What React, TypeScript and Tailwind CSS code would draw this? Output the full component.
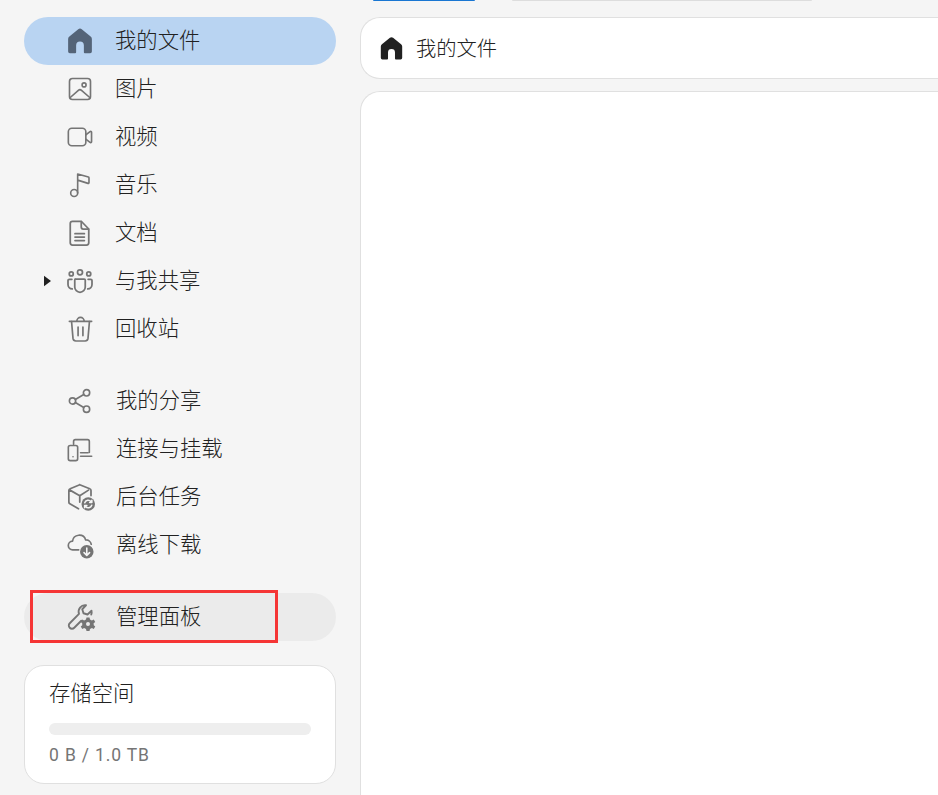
const gray = "#757575";

function Home({ className = "", fill = gray }: { className?: string; fill?: string }) {
  return (
    <svg viewBox="0 0 24 24" className={className}>
      <path
        fill={fill}
        d="M10.6 2.5a2.2 2.2 0 0 1 2.8 0l7.1 5.8a2.6 2.6 0 0 1 1 2v10a1.4 1.4 0 0 1-1.4 1.4h-4.2a.8.8 0 0 1-.8-.8v-5.4a3.1 3.1 0 0 0-6.2 0v5.4a.8.8 0 0 1-.8.8H3.9a1.4 1.4 0 0 1-1.4-1.4v-10a2.6 2.6 0 0 1 1-2z"
      />
    </svg>
  );
}

function Stroke({ children, className = "w-[28px] h-[28px]" }: { children: React.ReactNode; className?: string }) {
  return (
    <svg viewBox="0 0 24 24" fill="none" stroke={gray} strokeWidth="1.4" strokeLinecap="round" strokeLinejoin="round" className={`${className} shrink-0`}>
      {children}
    </svg>
  );
}

const icons: Record<string, React.ReactNode> = {
  image: (
    <Stroke>
      <rect x="3" y="3" width="18" height="18" rx="2.5" />
      <circle cx="15.5" cy="8.5" r="1.7" />
      <path d="M3.4 19.5l7.2-6.4a2 2 0 0 1 2.7 0l7.3 6.4" />
    </Stroke>
  ),
  video: (
    <Stroke>
      <rect x="2" y="4.5" width="15" height="15" rx="3" />
      <path d="M17 10.2l3.6-2.9a.8.8 0 0 1 1.3.6v8.2a.8.8 0 0 1-1.3.6L17 13.8" />
    </Stroke>
  ),
  music: (
    <Stroke>
      <circle cx="7" cy="18.9" r="3" />
      <path d="M10 18.9V2.6l9.2 2.6a.7.7 0 0 1 .5.7v4.1a.6.6 0 0 1-.8.6L10 7.8" />
    </Stroke>
  ),
  doc: (
    <Stroke className="w-[30px] h-[30px]">
      <path d="M6 2.6h7l6 6.2v11a1.8 1.8 0 0 1-1.8 1.8H6a1.8 1.8 0 0 1-1.8-1.8V4.4A1.8 1.8 0 0 1 6 2.6z" />
      <path d="M13 2.8v4.4a1.6 1.6 0 0 0 1.6 1.6h4.2" />
      <path d="M8 12.5h7.5M8 15.2h7.5M8 18h7.5" />
    </Stroke>
  ),
  people: (
    <Stroke className="w-[30px] h-[30px]">
      <circle cx="12" cy="5" r="2" />
      <circle cx="5" cy="6.3" r="1.6" />
      <circle cx="19" cy="6.3" r="1.6" />
      <path d="M8.6 10.4h6.8a.8.8 0 0 1 .8.8v5.6a4.2 4.2 0 0 1-8.4 0v-5.6a.8.8 0 0 1 .8-.8z" />
      <path d="M5.5 10.6H3.4a1 1 0 0 0-1 1v3.2a3.5 3.5 0 0 0 3.4 3.5M18.5 10.6h2.1a1 1 0 0 1 1 1v3.2a3.5 3.5 0 0 1-3.4 3.5" />
    </Stroke>
  ),
  trash: (
    <Stroke className="w-[29px] h-[29px]">
      <path d="M9 5a3 3 0 0 1 6 0" />
      <path d="M2.8 5.2h18.4" />
      <path d="M4.6 5.4l1.2 14a2.4 2.4 0 0 0 2.4 2.1h7.6a2.4 2.4 0 0 0 2.4-2.1l1.2-14" />
      <path d="M10 10v7M14 10v7" />
    </Stroke>
  ),
  share: (
    <Stroke>
      <circle cx="17.6" cy="5" r="2.7" />
      <circle cx="5.6" cy="12" r="2.7" />
      <circle cx="17.6" cy="19" r="2.7" />
      <path d="M8 10.7l7.2-4.3M8 13.3l7.2 4.3" />
    </Stroke>
  ),
  devices: (
    <Stroke>
      <path d="M6.5 8V5.5A1.5 1.5 0 0 1 8 4h10.5A1.5 1.5 0 0 1 20 5.5V15" />
      <path d="M12.5 15.2h6.5M12.5 18.2h9.5" />
      <rect x="2" y="9" width="8" height="13" rx="1.6" />
      <path d="M6 18.6h.01" />
    </Stroke>
  ),
  box: (
    <svg viewBox="0 0 24 24" className="ml-[1px] w-[30px] h-[30px] shrink-0" fill="none">
      <path stroke={gray} strokeWidth="1.4" strokeLinejoin="round" strokeLinecap="round" d="M11 2.2l8 3.2a1.5 1.5 0 0 1 1 1.4v4M10 21.4l-6.9-4a1.5 1.5 0 0 1-.8-1.3V6.8a1.5 1.5 0 0 1 1-1.4l7.7-3.2M2.8 6.3L11 11l7-4.5M11 11v5" />
      <circle cx="17.8" cy="17.6" r="5.4" fill={gray} />
      <path stroke="#f5f5f5" strokeWidth="1.2" strokeLinecap="round" strokeLinejoin="round" d="M15 16.6a2.9 2.9 0 0 1 5-1l.6.7M20.6 18.6a2.9 2.9 0 0 1-5 1l-.6-.7M20.7 14.6v1.8h-1.8M14.9 20.6v-1.8h1.8" />
    </svg>
  ),
  cloud: (
    <svg viewBox="0 0 24 24" className="ml-[1px] w-[29px] h-[29px] shrink-0" fill="none">
      <path stroke={gray} strokeWidth="1.4" strokeLinecap="round" strokeLinejoin="round" d="M10.5 15.6H5.6a3.6 3.6 0 0 1-.2-7.2A5.6 5.6 0 0 1 16.3 7.4a4.4 4.4 0 0 1 4.6 3.6" />
      <circle cx="17.2" cy="17.2" r="5.6" fill={gray} />
      <path stroke="#f5f5f5" strokeWidth="1.3" strokeLinecap="round" strokeLinejoin="round" d="M17.2 14v6M14.9 17.9l2.3 2.3 2.3-2.3" />
    </svg>
  ),
  wrench: (
    <svg viewBox="0 0 24 24" className="ml-[2px] w-[30px] h-[30px] shrink-0" fill="none">
      <path stroke={gray} strokeWidth="1.5" strokeLinecap="round" strokeLinejoin="round" d="M16 2.6a5.2 5.2 0 0 0-5.6 6.9L3 17a2.5 2.5 0 0 0 0 3.6 2.5 2.5 0 0 0 3.6 0l5.6-5.6M16 2.6l-3 3.2 1 3.2 3.2 1 3.2-3a5.2 5.2 0 0 1-.2 3" />
      <path fill={gray} fillRule="evenodd" d="M16.4 12.4h2.4l.4 1.6 1.5.7 1.5-.8 1.2 2-1.3 1 .1 1.6 1.2 1-1.2 2-1.5-.7-1.5.8-.4 1.6h-2.4l-.4-1.6-1.5-.8-1.5.7-1.2-2 1.2-1v-1.6l-1.2-1 1.2-2 1.5.8 1.5-.7zM17.6 16a1.6 1.6 0 1 0 0 3.2 1.6 1.6 0 0 0 0-3.2z" />
    </svg>
  ),
};

function NavItem({ icon, label, active, arrow, wide }: { icon: React.ReactNode; label: string; active?: boolean; arrow?: boolean; wide?: boolean }) {
  return (
    <div className={`relative flex h-[48px] items-center rounded-full pl-[42px] ${active ? "bg-[#b9d4f2]" : ""}`}>
      {arrow && (
        <svg viewBox="0 0 8 12" className="absolute left-[20px] top-[18px] w-[7px] h-[12px]">
          <path d="M0 0l8 6-8 6z" fill="#212121" />
        </svg>
      )}
      <span className="flex w-[28px] justify-center">{icon}</span>
      <span className={`${wide ? "ml-[22px]" : "ml-[21px]"} text-[21.33px] font-light text-[#212121] leading-none`}>{label}</span>
    </div>
  );
}

export default function App() {
  return (
    <div className="relative flex h-[795px] w-[938px] overflow-hidden bg-[#f5f5f5] font-['Roboto','Noto_Sans_CJK_SC',sans-serif]">
      <aside className="flex w-[360px] shrink-0 flex-col pl-[24px] pr-[24px] pt-[17px]">
        <NavItem active label="我的文件" icon={<Home className="w-[30px] h-[30px] shrink-0" fill="#546478" />} />
        <NavItem label="图片" icon={icons.image} />
        <NavItem label="视频" icon={icons.video} />
        <NavItem label="音乐" icon={icons.music} />
        <NavItem label="文档" icon={icons.doc} />
        <NavItem arrow label="与我共享" icon={icons.people} />
        <NavItem label="回收站" icon={icons.trash} />
        <div className="mt-[24px]">
          <NavItem wide label="我的分享" icon={icons.share} />
          <NavItem wide label="连接与挂载" icon={icons.devices} />
          <NavItem wide label="后台任务" icon={icons.box} />
          <NavItem wide label="离线下载" icon={icons.cloud} />
        </div>
        <div className="mt-[24px] rounded-full bg-[#ebebeb]">
          <NavItem wide label="管理面板" icon={icons.wrench} />
        </div>
        <div className="mt-[24px] h-[119px] rounded-[20px] border border-[#e0e0e0] bg-white px-[24px] pt-[14px]">
          <div className="text-[21.33px] font-light leading-[28px] text-[#212121]">存储空间</div>
          <div className="mt-[15px] h-[12px] rounded-full bg-[#eeeeee]" />
          <div className="mt-[8px] text-[17.5px] tracking-[0.85px] leading-[24px] text-[#757575]">0 B / 1.0 TB</div>
        </div>
      </aside>
      <main className="flex min-w-0 flex-1 flex-col">
        <div className="flex h-[1px] items-start">
          <div className="ml-[13px] h-[1px] w-[102px] rounded-b bg-[#1976d2]" />
          <div className="ml-[37px] h-[1px] w-[300px] rounded-b bg-[#dddddd]" />
        </div>
        <div className="mt-[16px] flex h-[62px] items-center rounded-l-[20px] border border-r-0 border-[#e0e0e0] bg-white pl-[17px]">
          <Home className="w-[27px] h-[27px] shrink-0" fill="#212121" />
          <span className="ml-[11px] mt-[1px] text-[20.3px] font-light leading-[28px] text-[#212121]">我的文件</span>
        </div>
        <div className="mt-[12px] flex-1 rounded-tl-[20px] border-l border-t border-[#e0e0e0] bg-white" />
      </main>
      <div className="absolute left-[30px] top-[590px] h-[53px] w-[248px] border-[3px] border-[#f53535]" />
    </div>
  );
}
